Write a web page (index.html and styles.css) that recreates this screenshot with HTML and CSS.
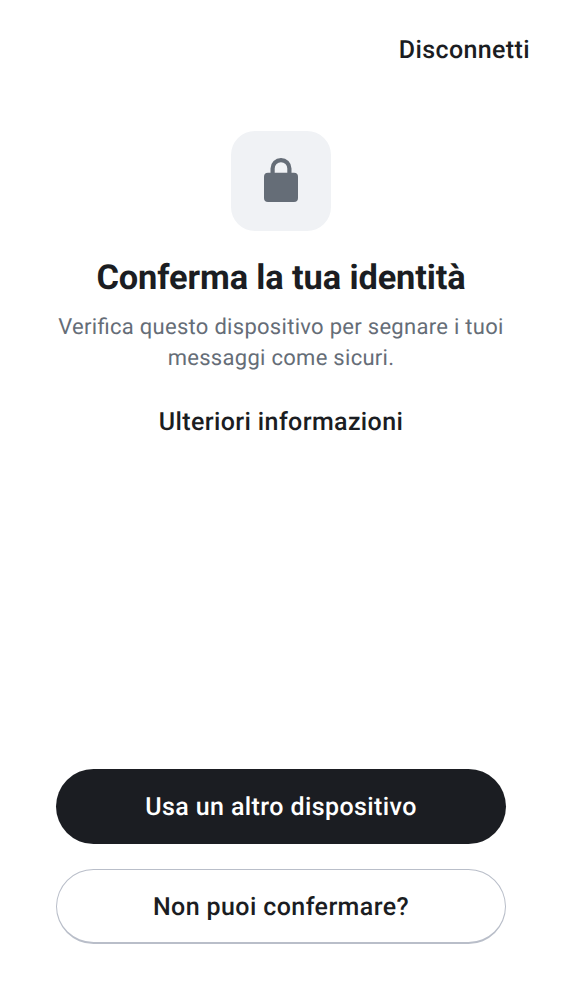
FILE: index.html
```html
<!DOCTYPE html>
<html lang="it">
<head>
<meta charset="utf-8">
<title>Conferma la tua identità</title>
<link rel="stylesheet" href="styles.css">
</head>
<body>
<main class="screen">
  <header class="topbar"><button class="text-button signout">Disconnetti</button></header>
  <section class="intro">
    <div class="icon-tile">
      <svg class="lock" viewBox="0 0 34 44" aria-hidden="true">
        <path fill="currentColor" fill-rule="evenodd" d="M4 14.8H6.5V10.5a10.500 10.500 0 0 1 21 0v4.300H30a4 4 0 0 1 4 4V40a4 4 0 0 1-4 4H4a4 4 0 0 1-4-4V18.800a4 4 0 0 1 4-4ZM10.700 14.800h12.600V10.500a6.300 6.300 0 0 0-12.600 0Z"/>
      </svg>
    </div>
    <h1 class="title">Conferma la tua identità</h1>
    <p class="subtitle">Verifica questo dispositivo per segnare i tuoi<br>messaggi come sicuri.</p>
    <button class="text-button more">Ulteriori informazioni</button>
  </section>
  <footer class="actions">
    <button class="button primary"><span>Usa un altro dispositivo</span></button>
    <button class="button secondary"><span>Non puoi confermare?</span></button>
  </footer>
</main>
</body>
</html>
```
FILE: styles.css
```css
* { box-sizing: border-box; }
body { margin: 0; background: #fff; font-family: Roboto, sans-serif; color: #1b1d22; text-rendering: geometricPrecision; }
.screen { height: 1000px; display: flex; flex-direction: column; padding: 0 56px 56px; }
.topbar { height: 100px; padding-top: 2px; display: flex; justify-content: flex-end; align-items: center; margin-right: -24px; }
.text-button { border: 0; padding: 0; background: none; color: inherit; font: 500 25px/38px Roboto, sans-serif; letter-spacing: 0.38px; white-space: nowrap; text-rendering: inherit; }
.intro { flex: 1; display: flex; flex-direction: column; align-items: center; padding-top: 31px; }
.icon-tile { width: 100px; height: 100px; padding-bottom: 2px; border-radius: 24px; background: #f0f2f5; color: #656d77; display: grid; place-items: center; }
.lock { width: 34px; height: 44px; }
.title { margin: 25px 0 0; font-size: 34.400px; line-height: 44px; font-weight: 700; letter-spacing: -0.12px; white-space: nowrap; }
.subtitle { margin: 12px 0 0; font-size: 22px; line-height: 31px; letter-spacing: 0.29px; font-feature-settings: "liga" 1; color: #656d77; text-align: center; white-space: nowrap; }
.more { margin-top: 30px; }
.actions { display: flex; flex-direction: column; gap: 25px; }
.button { height: 75px; padding: 2px 0 0; border-radius: 38px; font: 500 25px/38px Roboto, sans-serif; letter-spacing: 0.4px; text-rendering: inherit; }
.primary { border: 0; background: #1b1d22; color: #fff; }
.secondary { padding-top: 3px; border: 1px solid #b9bec9; border-bottom-width: 2px; background: #fff; color: #1b1d22; }
```
